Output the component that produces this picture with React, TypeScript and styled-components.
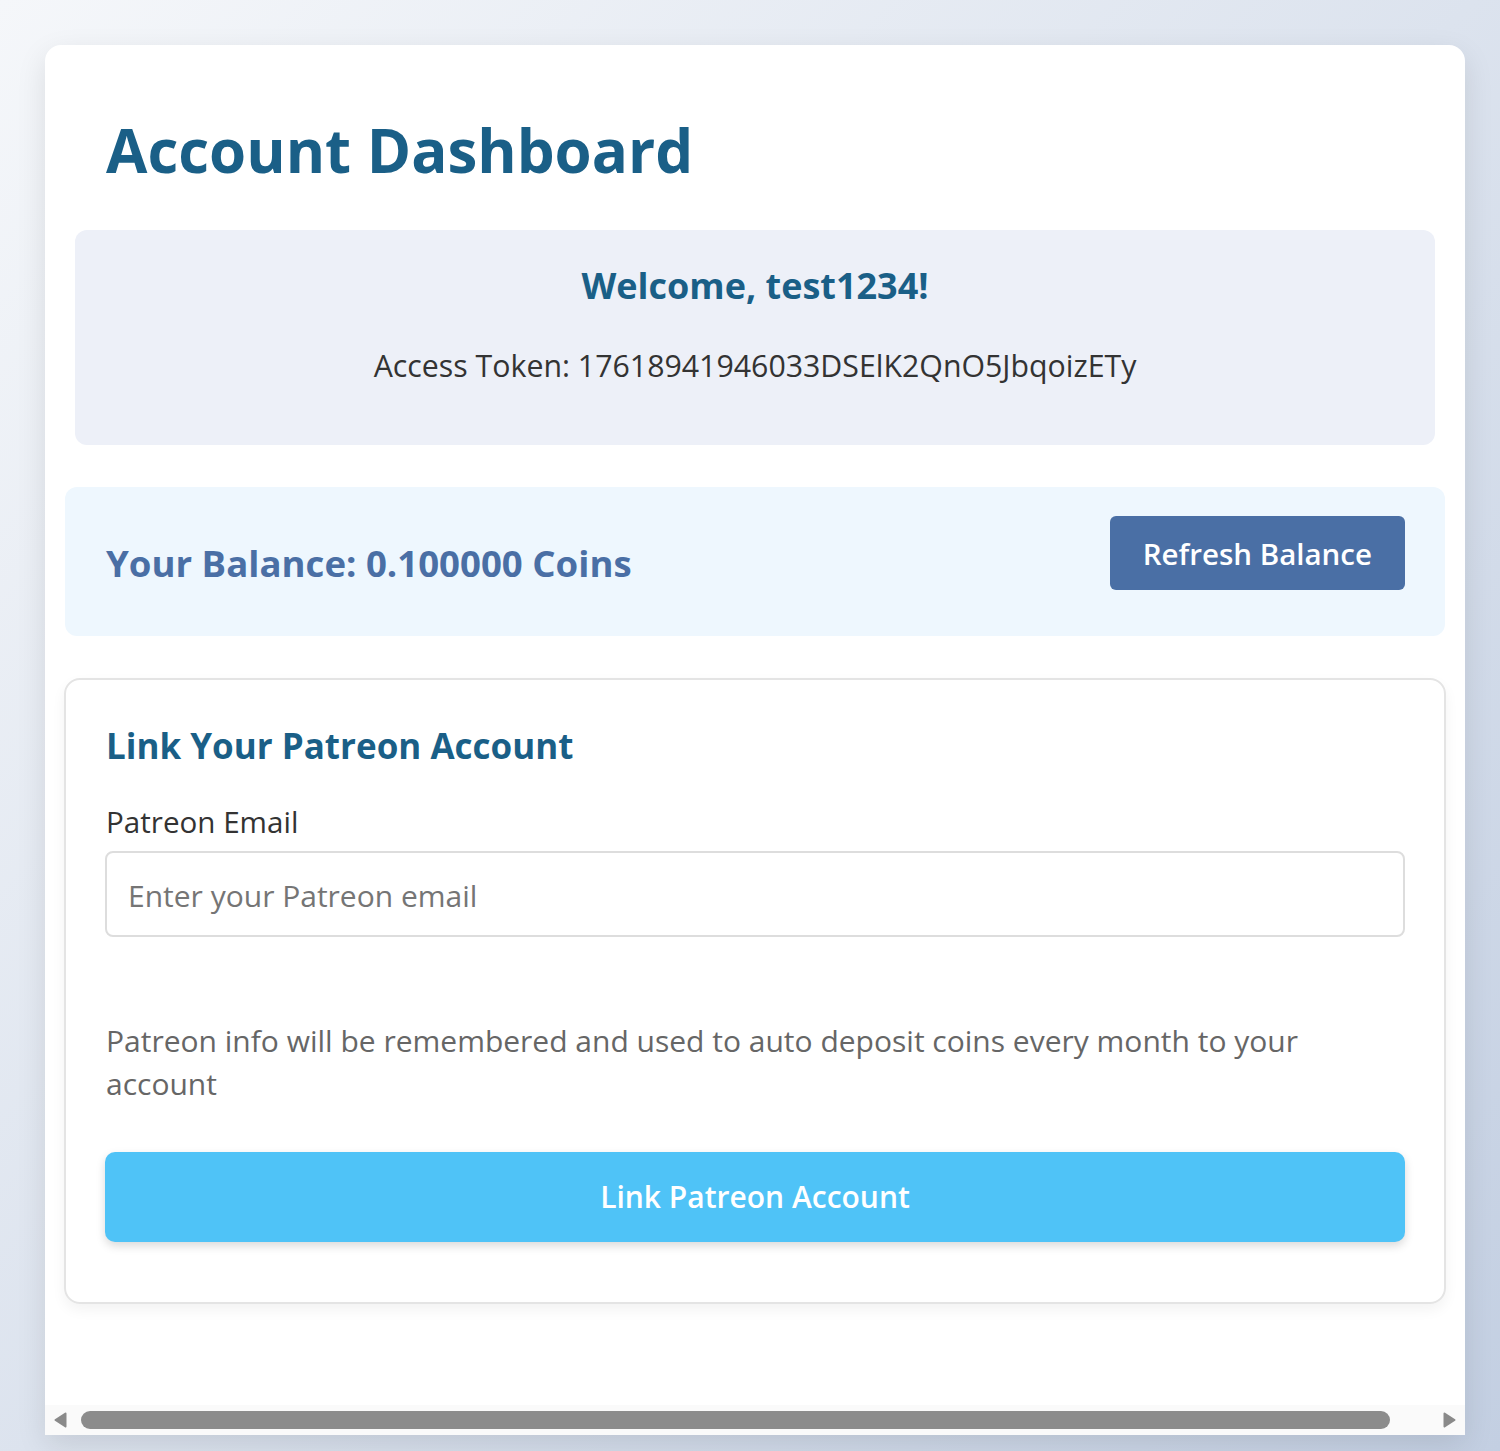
import React from "react";
import styled, { createGlobalStyle } from "styled-components";

const GlobalStyle = createGlobalStyle`
	* { box-sizing: border-box; }
	body {
		margin: 0;
		font-family: "Open Sans", "Noto Sans", "Liberation Sans", sans-serif;
		background: linear-gradient(135deg, #f5f7fa 0%, #c3cfe2 100%);
		min-height: 100vh;
	}
`

const Page = styled.div`
	padding: 45px 35px 16px 45px;
	min-height: 100vh;
`

const Card = styled.div`
	background: #fff;
	border-radius: 16px 16px 0 0;
	box-shadow: 0 10px 30px rgba(0, 0, 0, 0.1);
	display: flex;
	flex-direction: column;
`

const Content = styled.div`
	padding: 0 20px 101px;
`

const Title = styled.h1`
	margin: 68px 0 43px 41px;
	font-size: 60px;
	line-height: 74px;
	font-weight: 700;
	color: #1a5f87;
`

const WelcomePanel = styled.section`
	margin: 0 10px;
	padding: 32px 20px 57px;
	background: #edf0f8;
	border-radius: 12px;
	text-align: center;
`

const Welcome = styled.h2`
	margin: 0;
	font-size: 36px;
	line-height: 48px;
	font-weight: 700;
	color: #1a5f87;
`

const Token = styled.p`
	margin: 33px 0 0;
	font-size: 30.3px;
	line-height: 45px;
	color: #333;
`

const BalancePanel = styled.section`
	margin-top: 42px;
	padding: 29px 40px 46px 41px;
	background: #eef7fe;
	border-radius: 12px;
	display: flex;
	justify-content: space-between;
	align-items: flex-start;
`

const Balance = styled.h2`
	margin: 22px 0 0;
	font-size: 36.6px;
	line-height: 50px;
	font-weight: 700;
	color: #4a6fa5;
`

const Button = styled.button<{ $wide?: boolean }>`
	border: none;
	cursor: pointer;
	font-family: inherit;
	font-weight: 600;
	font-size: ${p => p.$wide ? "30px" : "29.5px"};
	line-height: 40px;
	color: #fff;
	width: ${p => p.$wide ? "100%" : "auto"};
	padding: ${p => p.$wide ? "25px 20px" : "18px 33px 16px"};
	background: ${p => p.$wide ? "#4fc3f7" : "#4a6fa5"};
	border-radius: ${p => p.$wide ? "10px" : "6px"};
	box-shadow: ${p => p.$wide ? "0 4px 10px rgba(0, 0, 0, 0.15)" : "none"};
`

const LinkCard = styled.section`
	margin: 42px -1px 0;
	padding: 42px 39px 60px;
	border: 2px solid #e4e4e4;
	border-radius: 16px;
	box-shadow: 0 6px 14px rgba(0, 0, 0, 0.05);
`

const SectionTitle = styled.h3`
	margin: 0 0 0 1px;
	font-size: 35px;
	line-height: 48px;
	font-weight: 700;
	color: #1a5f87;
`

const Label = styled.label`
	display: block;
	margin: 32px 0 0 1px;
	font-size: 29.6px;
	line-height: 40px;
	color: #333;
`

const Input = styled.input`
	display: block;
	width: 100%;
	margin-top: 9px;
	padding: 22px 21px 18px;
	border: 2px solid #dddddd;
	border-radius: 8px;
	font-family: inherit;
	font-size: 30px;
	line-height: 42px;
	color: #333;
	outline: none;
	&::placeholder { color: #757575; }
`

const Note = styled.p`
	margin: 82px 0 47px 1px;
	font-size: 30px;
	line-height: 43px;
	color: #666;
`

const ScrollTrack = styled.div`
	height: 30px;
	background: #fafafa;
	display: flex;
	align-items: center;
	padding: 0 9px;
`

const Thumb = styled.div`
	flex: 1;
	height: 18px;
	margin: 0 53px 0 14px;
	border-radius: 9px;
	background: #8c8c8c;
`

const Arrow = ({ dir }: { dir: "left" | "right" }) => (
	<svg width="13" height="16" viewBox="0 0 13 16">
		<polygon
			points={dir === "left" ? "11.5,1.5 1.5,8 11.5,14.5" : "1.5,1.5 11.5,8 1.5,14.5"}
			fill="#8a8a8a"
			stroke="#8a8a8a"
			strokeWidth="2"
			strokeLinejoin="round"
		/>
	</svg>
)

export default function App() {
	return (
		<>
			<GlobalStyle />
			<Page>
				<Card>
					<Content>
						<Title>Account Dashboard</Title>
						<WelcomePanel>
							<Welcome>Welcome, test1234!</Welcome>
							<Token>Access Token: 17618941946033DSElK2QnO5JbqoizETy</Token>
						</WelcomePanel>
						<BalancePanel>
							<Balance>Your Balance: 0.100000 Coins</Balance>
							<Button>Refresh Balance</Button>
						</BalancePanel>
						<LinkCard>
							<SectionTitle>Link Your Patreon Account</SectionTitle>
							<Label htmlFor="patreon-email">Patreon Email</Label>
							<Input id="patreon-email" type="email" placeholder="Enter your Patreon email" />
							<Note>Patreon info will be remembered and used to auto deposit coins every month to your account</Note>
							<Button $wide>Link Patreon Account</Button>
						</LinkCard>
					</Content>
					<ScrollTrack>
						<Arrow dir="left" />
						<Thumb />
						<Arrow dir="right" />
					</ScrollTrack>
				</Card>
			</Page>
		</>
	);
}
